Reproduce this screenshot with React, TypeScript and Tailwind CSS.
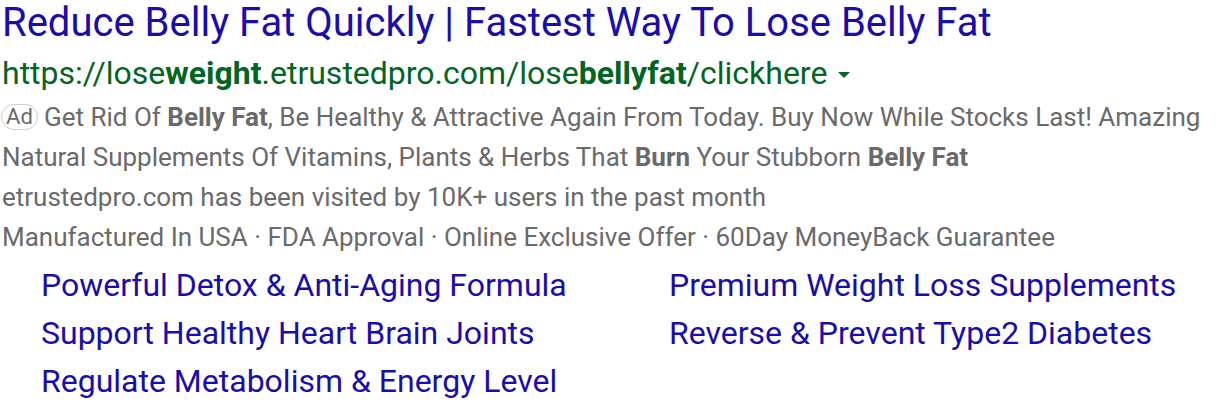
import React from "react";

export default function App() {
  return (
    <div className="w-[1216px] h-[410px] bg-white overflow-hidden" style={{ fontFamily: "Roboto, 'Liberation Sans', sans-serif" }}>
      <div className="pl-[2px]">
        <div className="text-[40px] leading-[46px] text-[#1a0dab] whitespace-nowrap">
          Reduce Belly Fat Quickly | Fastest Way To Lose Belly Fat
        </div>
        <div className="flex items-center mt-[7px] text-[32px] leading-[40px] text-[#006621] whitespace-nowrap">
          <span>
            https://lose<b className="font-bold">weight</b>.etrustedpro.com/lose<b className="font-bold">bellyfat</b>/clickhere
          </span>
          <span className="ml-[11px] mt-[3px] w-0 h-0 border-l-[6px] border-r-[6px] border-t-[6px] border-l-transparent border-r-transparent border-t-[#006621]" />
        </div>
        <div className="text-[26px] leading-[40px] text-[#6a6a6a] mt-[4px]">
          <div className="flex items-center whitespace-nowrap">
            <span className="inline-flex items-center justify-center h-[26px] w-[37px] -ml-[1px] mr-[6px] rounded-full border border-[#cfcfcf] text-[22px] leading-none text-[#6a6a6a]">
              Ad
            </span>
            <span>
              Get Rid Of <b className="font-bold">Belly Fat</b>, Be Healthy &amp; Attractive Again From Today. Buy Now While Stocks Last! Amazing
            </span>
          </div>
          <div className="whitespace-nowrap">
            Natural Supplements Of Vitamins, Plants &amp; Herbs That <b className="font-bold">Burn</b> Your Stubborn <b className="font-bold">Belly Fat</b>
          </div>
          <div className="whitespace-nowrap">etrustedpro.com has been visited by 10K+ users in the past month</div>
          <div className="whitespace-nowrap">
            Manufactured In USA · FDA Approval · Online Exclusive Offer · 60Day MoneyBack Guarantee
          </div>
        </div>
        <div className="grid grid-cols-[628px_1fr] pl-[39px] text-[32px] leading-[48px] text-[#1a0dab] mt-[4px]">
          <div className="whitespace-nowrap">Powerful Detox &amp; Anti-Aging Formula</div>
          <div className="whitespace-nowrap">Premium Weight Loss Supplements</div>
          <div className="whitespace-nowrap">Support Healthy Heart Brain Joints</div>
          <div className="whitespace-nowrap">Reverse &amp; Prevent Type2 Diabetes</div>
          <div className="whitespace-nowrap">Regulate Metabolism &amp; Energy Level</div>
        </div>
      </div>
    </div>
  );
}
